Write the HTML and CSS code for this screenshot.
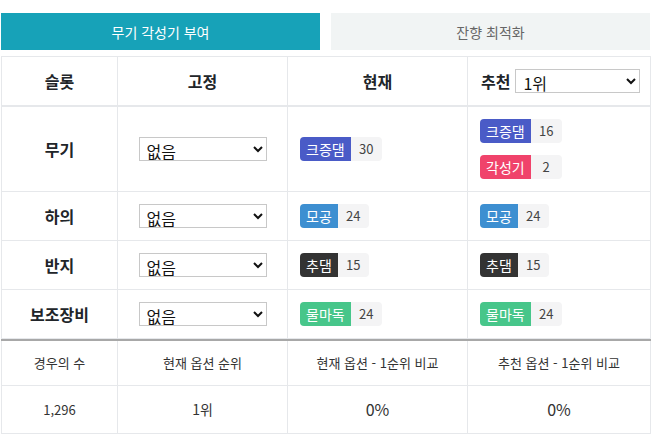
FILE: index.html
```html
<!DOCTYPE html>
<html lang="ko">
<head>
    <meta charset="UTF-8">
    <meta name="viewport" content="width=device-width, initial-scale=1.0">
    <title>무기 각성기 부여</title>
    <link rel="stylesheet" href="styles.css">
</head>
<body>
    <div class="wrap">
        <div class="tabs">
            <button class="tab active">무기 각성기 부여</button>
            <button class="tab">잔향 최적화</button>
        </div>

        <table class="slots">
            <colgroup>
                <col class="c1"><col class="c2"><col class="c3"><col class="c4">
            </colgroup>
            <thead>
                <tr>
                    <th>슬롯</th>
                    <th>고정</th>
                    <th>현재</th>
                    <th>
                        <div class="rec">
                            <span>추천</span>
                            <select class="sel wide">
                                <option>1위</option>
                                <option>2위</option>
                                <option>3위</option>
                            </select>
                        </div>
                    </th>
                </tr>
            </thead>
            <tbody>
                <tr>
                    <th>무기</th>
                    <td><select class="sel"><option>없음</option></select></td>
                    <td>
                        <span class="opt"><span class="name indigo">크증댐</span><span class="val">30</span></span>
                    </td>
                    <td>
                        <div class="stack">
                            <span class="opt"><span class="name indigo">크증댐</span><span class="val">16</span></span>
                            <span class="opt"><span class="name red">각성기</span><span class="val">2</span></span>
                        </div>
                    </td>
                </tr>
                <tr>
                    <th>하의</th>
                    <td><select class="sel"><option>없음</option></select></td>
                    <td><span class="opt"><span class="name blue">모공</span><span class="val">24</span></span></td>
                    <td><span class="opt"><span class="name blue">모공</span><span class="val">24</span></span></td>
                </tr>
                <tr>
                    <th>반지</th>
                    <td><select class="sel"><option>없음</option></select></td>
                    <td><span class="opt"><span class="name dark">추댐</span><span class="val">15</span></span></td>
                    <td><span class="opt"><span class="name dark">추댐</span><span class="val">15</span></span></td>
                </tr>
                <tr>
                    <th>보조장비</th>
                    <td><select class="sel"><option>없음</option></select></td>
                    <td><span class="opt"><span class="name green">물마독</span><span class="val">24</span></span></td>
                    <td><span class="opt"><span class="name green">물마독</span><span class="val">24</span></span></td>
                </tr>
            </tbody>
        </table>

        <table class="summary">
            <colgroup>
                <col class="c1"><col class="c2"><col class="c3"><col class="c4">
            </colgroup>
            <tr class="head">
                <td>경우의 수</td>
                <td>현재 옵션 순위</td>
                <td>현재 옵션 - 1순위 비교</td>
                <td>추천 옵션 - 1순위 비교</td>
            </tr>
            <tr>
                <td class="small">1,296</td>
                <td class="mid">1위</td>
                <td class="big">0%</td>
                <td class="big">0%</td>
            </tr>
        </table>
    </div>
</body>
</html>
```

FILE: styles.css
```css
*{
    margin: 0;
    padding: 0;
    box-sizing: border-box;
}
body{
    font-family: "Noto Sans CJK KR", "Noto Sans", sans-serif;
    color: #212529;
    background: white;
}
.wrap{
    padding: 13px 4px 0 1px;
}
.tabs{
    display: grid;
    grid-template-columns: 1fr 1fr;
    gap: 11px;
    margin-right: 1px;
    margin-bottom: 6px;
}
.tab{
    height: 37px;
    border: none;
    font-family: inherit;
    font-size: 14px;
    background-color: #f1f4f4;
    color: #666;
}
.tab.active{
    background-color: #17a2b8;
    color: white;
}
table{
    width: 100%;
    border-collapse: collapse;
    table-layout: fixed;
}
.c1{ width: 116px; }
.c2{ width: 170px; }
.c3{ width: 180px; }
th, td{
    border: 1px solid #e6e8eb;
    padding: 12px;
    text-align: center;
    vertical-align: middle;
}
.slots th{
    font-size: 16px;
    font-weight: bold;
    line-height: 24px;
}
.slots thead th{
    border-bottom: 2px solid #e6e8eb;
    padding: 12px 8px;
}
.slots td{
    text-align: left;
    line-height: 24px;
    height: 48px;
}
.rec{
    display: flex;
    align-items: center;
    gap: 5px;
    padding-left: 5px;
}
.sel{
    display: block;
    width: 128px;
    height: 24px;
    margin: 0 auto;
    font-family: inherit;
    font-size: 16px;
    border: 1px solid #c8c8c8;
    border-radius: 0;
    background: white;
    color: #111;
    padding-left: 3px;
}
.sel.wide{
    width: 125px;
    margin: 0;
}
.stack{
    display: flex;
    flex-direction: column;
    align-items: flex-start;
    gap: 12px;
}
.opt{
    display: flex;
    width: max-content;
    height: 24px;
    font-size: 14px;
    line-height: 24px;
    border-radius: 4px;
    overflow: hidden;
}
.name{
    color: white;
    padding: 0 6px;
}
.val{
    background-color: #f4f4f5;
    color: #444;
    font-size: 13px;
    padding: 0 8px;
    min-width: 31px;
    text-align: center;
}
.indigo{ background-color: #4a5bc7; }
.blue{ background-color: #3d8fd1; }
.red{ background-color: #f0436b; }
.dark{ background-color: #333333; }
.green{ background-color: #47c68a; }
.summary{
    border-top: 2px solid #a8a8a8;
}
.summary td{
    color: #333;
}
.summary .head td{
    font-size: 13px;
    line-height: 20px;
}
.small{
    font-size: 13px;
    line-height: 23px;
}
.mid{
    font-size: 14px;
    line-height: 23px;
}
.big{
    font-size: 16px;
    line-height: 23px;
}
```
